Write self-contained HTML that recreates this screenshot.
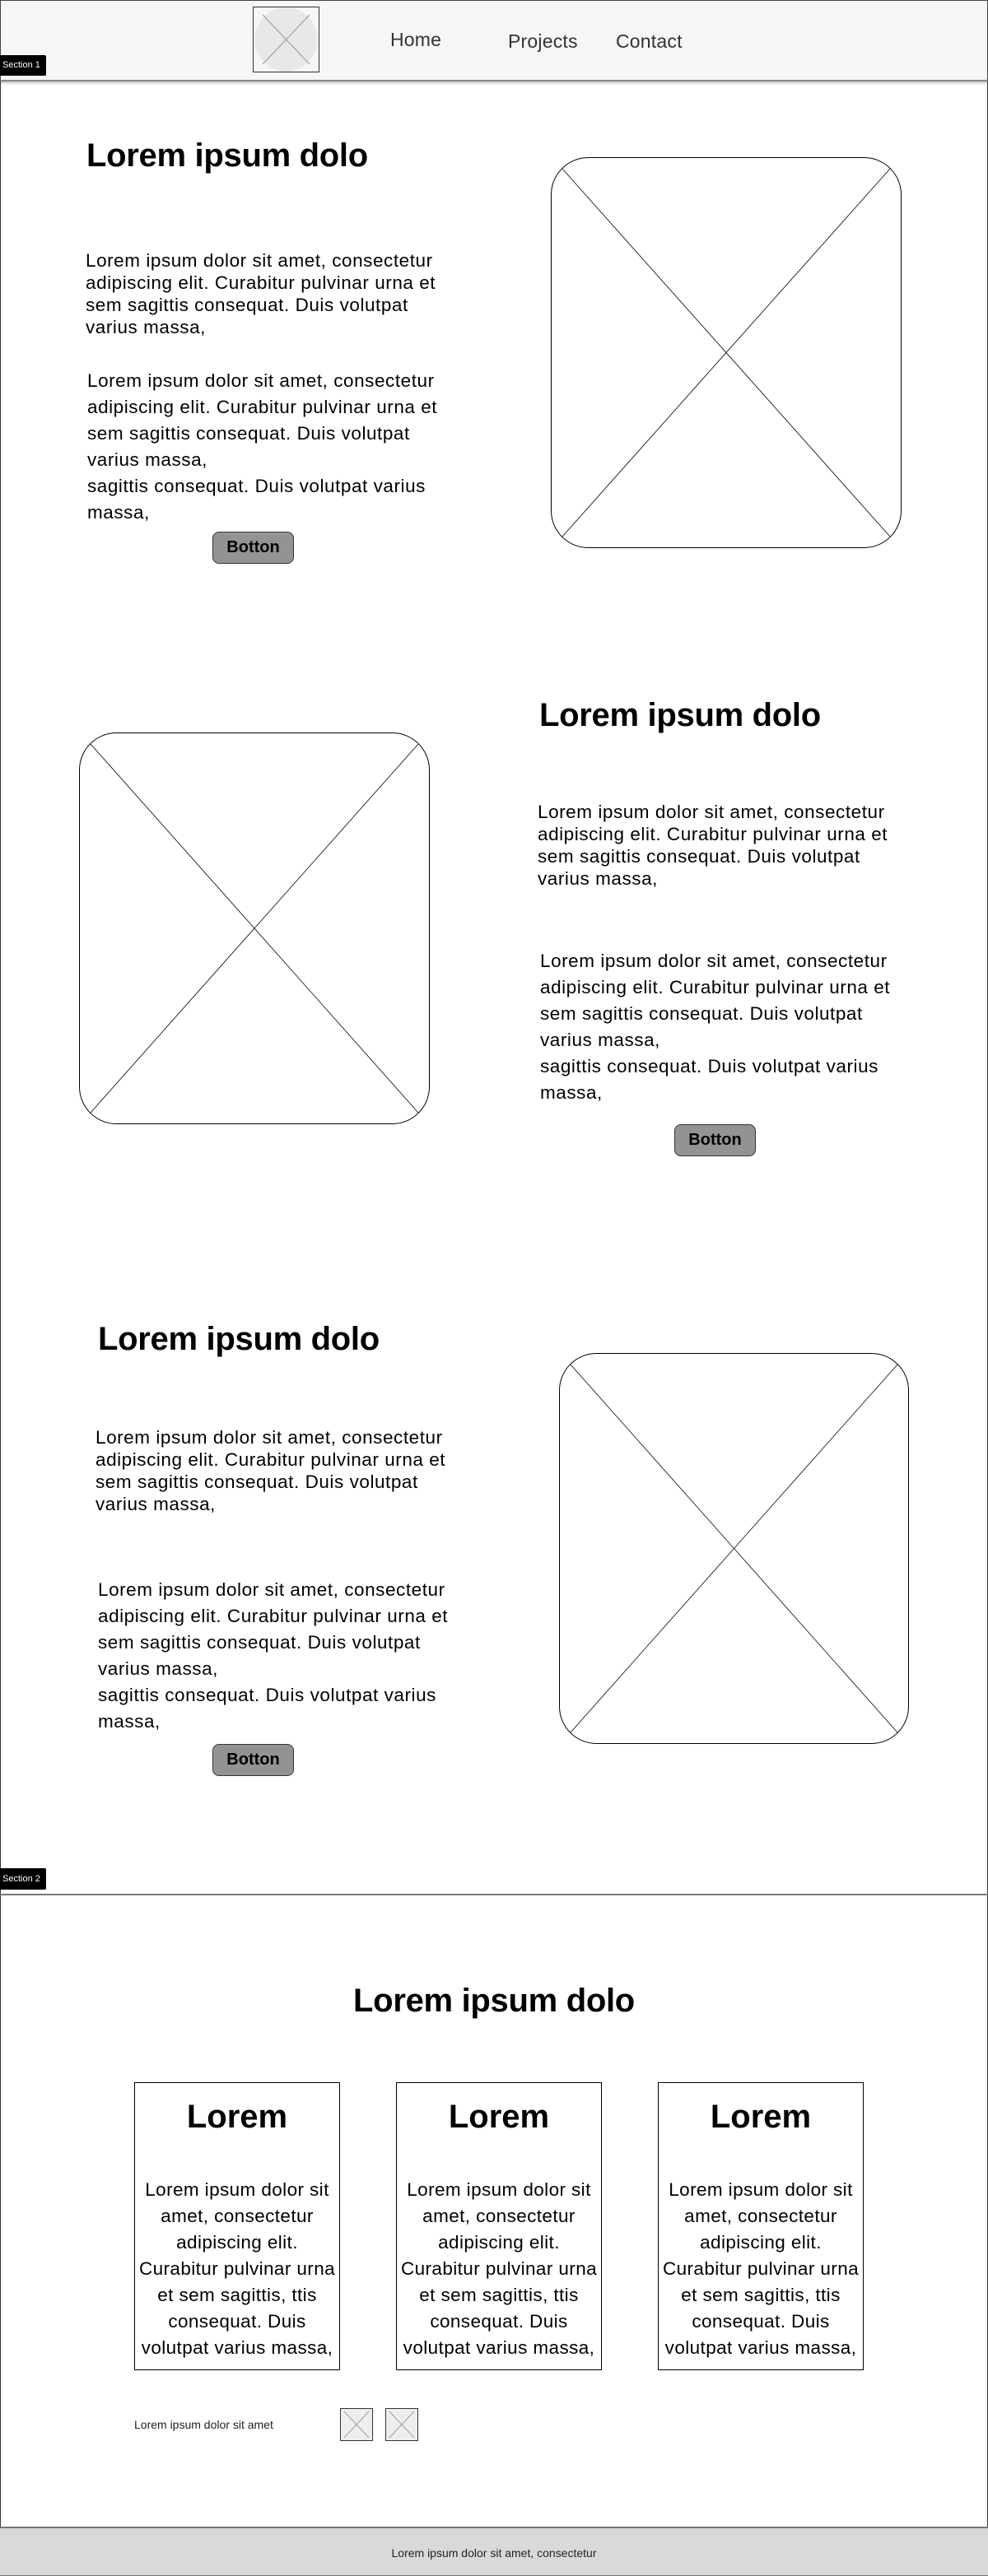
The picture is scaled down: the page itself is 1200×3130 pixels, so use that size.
<!DOCTYPE html>
<html><head><meta charset="utf-8">
<style>
*{margin:0;padding:0;box-sizing:border-box}
html,body{width:1200px;height:3130px;background:#fff;overflow:hidden}
body{position:relative;font-family:"Liberation Sans",Arial,sans-serif;color:#000}
.frame{position:absolute;left:0;top:0;width:1200px;height:3130px;border-left:1px solid #333;border-right:1px solid #333}
.a{position:absolute}
header{position:absolute;left:0;top:0;width:1200px;height:99px;background:#f6f6f6;border:1px solid #444;border-bottom:2px solid #888;box-shadow:0 2px 3px rgba(0,0,0,.25)}
.nav{position:absolute;font-size:23px;color:#333;top:36px;letter-spacing:.2px}
.lbl{position:absolute;left:0;background:#000;color:#fff;font-size:11px;width:56px;height:24px;line-height:24px;padding-left:3px;border-radius:0 2px 2px 0}
h1{position:absolute;font-size:40px;font-weight:bold;line-height:48px;letter-spacing:-.3px;white-space:nowrap}
.p1{position:absolute;font-size:22.5px;letter-spacing:.55px;line-height:27px;white-space:nowrap}
.p2{position:absolute;font-size:22.5px;letter-spacing:.55px;line-height:32px;white-space:nowrap}
.btn{position:absolute;width:99px;height:39px;background:#939393;border:1px solid #333;border-radius:8px;font-weight:bold;font-size:20px;text-align:center;line-height:37px}
.card{position:absolute;top:2530px;width:250px;height:350px;border:1px solid #000;text-align:center}
.card .t{position:absolute;left:0;right:0;top:17px;font-size:40px;font-weight:bold;line-height:48px}
.card .x{position:absolute;left:-5px;right:-5px;top:114px;font-size:22.5px;letter-spacing:.4px;line-height:32px;white-space:nowrap}
.ico{position:absolute;top:2926px;width:40px;height:40px;border:1px solid #333;background:#eee}
footer{position:absolute;left:0;top:3070px;width:1200px;height:60px;background:#d9d9d9;border-top:2px solid #777;border-bottom:1px solid #777;text-align:center;font-size:14px;line-height:60px;color:#222}
</style></head><body>
<div class="frame"></div>
<header>
  <svg class="a" style="left:306px;top:7px" width="81" height="80" viewBox="0 0 81 80">
    <rect x="0.5" y="0.5" width="80" height="79" fill="#f6f6f6" stroke="#333"/>
    <ellipse cx="40.5" cy="40" rx="38" ry="39" fill="#e8e8e8"/>
    <line x1="12" y1="10" x2="69" y2="70" stroke="#999"/>
    <line x1="69" y1="10" x2="12" y2="70" stroke="#999"/>
  </svg>
  <div class="nav" style="left:473px;top:34px">Home</div>
  <div class="nav" style="left:616px">Projects</div>
  <div class="nav" style="left:747px">Contact</div>
</header>
<div class="lbl" style="top:67px;height:25px;line-height:25px">Section 1</div>

<h1 style="left:105px;top:165px">Lorem ipsum dolo</h1>
<div class="p1" style="left:104px;top:303px">Lorem ipsum dolor sit amet, consectetur<br>adipiscing elit. Curabitur pulvinar urna et<br>sem sagittis consequat. Duis volutpat<br>varius massa,</div>
<div class="p2" style="left:106px;top:447px">Lorem ipsum dolor sit amet, consectetur<br>adipiscing elit. Curabitur pulvinar urna et<br>sem sagittis consequat. Duis volutpat<br>varius massa,<br>sagittis consequat. Duis volutpat varius<br>massa,</div>
<div class="btn" style="left:258px;top:646px">Botton</div>
<svg class="a" style="left:669px;top:191px" width="426" height="475" viewBox="0 0 426 475">
  <rect x="0.5" y="0.5" width="425" height="474" rx="45" fill="#fff" stroke="#000"/>
  <line x1="14" y1="14" x2="412" y2="461" stroke="#000" stroke-width=".8"/>
  <line x1="412" y1="14" x2="14" y2="461" stroke="#000" stroke-width=".8"/>
</svg>

<svg class="a" style="left:96px;top:890px" width="426" height="476" viewBox="0 0 426 476">
  <rect x="0.5" y="0.5" width="425" height="475" rx="45" fill="#fff" stroke="#000"/>
  <line x1="14" y1="14" x2="412" y2="462" stroke="#000" stroke-width=".8"/>
  <line x1="412" y1="14" x2="14" y2="462" stroke="#000" stroke-width=".8"/>
</svg>
<h1 style="left:655px;top:845px">Lorem ipsum dolo</h1>
<div class="p1" style="left:653px;top:973px">Lorem ipsum dolor sit amet, consectetur<br>adipiscing elit. Curabitur pulvinar urna et<br>sem sagittis consequat. Duis volutpat<br>varius massa,</div>
<div class="p2" style="left:656px;top:1152px">Lorem ipsum dolor sit amet, consectetur<br>adipiscing elit. Curabitur pulvinar urna et<br>sem sagittis consequat. Duis volutpat<br>varius massa,<br>sagittis consequat. Duis volutpat varius<br>massa,</div>
<div class="btn" style="left:819px;top:1366px">Botton</div>

<h1 style="left:119px;top:1603px">Lorem ipsum dolo</h1>
<div class="p1" style="left:116px;top:1733px">Lorem ipsum dolor sit amet, consectetur<br>adipiscing elit. Curabitur pulvinar urna et<br>sem sagittis consequat. Duis volutpat<br>varius massa,</div>
<div class="p2" style="left:119px;top:1916px">Lorem ipsum dolor sit amet, consectetur<br>adipiscing elit. Curabitur pulvinar urna et<br>sem sagittis consequat. Duis volutpat<br>varius massa,<br>sagittis consequat. Duis volutpat varius<br>massa,</div>
<div class="btn" style="left:258px;top:2119px">Botton</div>
<svg class="a" style="left:679px;top:1644px" width="425" height="475" viewBox="0 0 425 475">
  <rect x="0.5" y="0.5" width="424" height="474" rx="45" fill="#fff" stroke="#000"/>
  <line x1="14" y1="14" x2="411" y2="461" stroke="#000" stroke-width=".8"/>
  <line x1="411" y1="14" x2="14" y2="461" stroke="#000" stroke-width=".8"/>
</svg>

<div class="lbl" style="top:2270px;height:26px;line-height:26px">Section 2</div>
<div class="a" style="left:0;top:2301px;width:1200px;height:2px;background:#777"></div>
<h1 style="left:0;width:1200px;text-align:center;top:2407px">Lorem ipsum dolo</h1>
<div class="card" style="left:163px"><div class="t">Lorem</div><div class="x">Lorem ipsum dolor sit<br>amet, consectetur<br>adipiscing elit.<br>Curabitur pulvinar urna<br>et sem sagittis, ttis<br>consequat. Duis<br>volutpat varius massa,</div></div>
<div class="card" style="left:481px"><div class="t">Lorem</div><div class="x">Lorem ipsum dolor sit<br>amet, consectetur<br>adipiscing elit.<br>Curabitur pulvinar urna<br>et sem sagittis, ttis<br>consequat. Duis<br>volutpat varius massa,</div></div>
<div class="card" style="left:799px"><div class="t">Lorem</div><div class="x">Lorem ipsum dolor sit<br>amet, consectetur<br>adipiscing elit.<br>Curabitur pulvinar urna<br>et sem sagittis, ttis<br>consequat. Duis<br>volutpat varius massa,</div></div>
<div class="a" style="left:163px;top:2938px;font-size:14px;color:#222">Lorem ipsum dolor sit amet</div>
<svg class="ico" style="left:413px" viewBox="0 0 40 40"><line x1="4" y1="3" x2="36" y2="37" stroke="#999"/><line x1="36" y1="3" x2="4" y2="37" stroke="#999"/></svg>
<svg class="ico" style="left:468px" viewBox="0 0 40 40"><line x1="4" y1="3" x2="36" y2="37" stroke="#999"/><line x1="36" y1="3" x2="4" y2="37" stroke="#999"/></svg>

<footer>Lorem ipsum dolor sit amet, consectetur</footer>
</body></html>
